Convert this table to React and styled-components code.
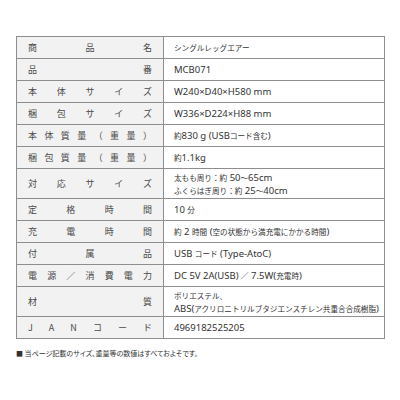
import React from "react";
import styled, { createGlobalStyle } from "styled-components";

const GlobalStyle = createGlobalStyle`
  html, body {
    margin: 0;
    padding: 0;
    background: #fff;
  }
  body {
    font-family: "Noto Sans CJK JP", "Noto Sans", sans-serif;
    color: #333;
  }
`;

const Page = styled.div`
  width: 400px;
  height: 400px;
  padding: 36px 15px 0 16px;
  box-sizing: border-box;
`;

const SpecTable = styled.div`
  display: grid;
  grid-template-columns: 147px 1fr;
  border: 1px solid #8e8e8e;
  border-bottom: none;
`;

const Label = styled.div`
  display: flex;
  justify-content: space-between;
  align-items: center;
  height: ${(p) => (p.$tall ? "29px" : "21px")};
  padding: 0 11px 0 11px;
  background: #f2f2f2;
  border-right: 1px solid #8e8e8e;
  border-bottom: 1px solid #8e8e8e;
  font-size: 9px;
  color: #4a4a4a;
`;

const Value = styled.div`
  display: flex;
  flex-direction: column;
  justify-content: center;
  height: ${(p) => (p.$tall ? "29px" : "21px")};
  padding-left: 10px;
  border-bottom: 1px solid #8e8e8e;
  font-family: "Noto Sans", "Noto Sans CJK JP", sans-serif;
  font-size: 9.5px;
  line-height: 13px;
  color: #333;
  white-space: nowrap;
`;

const Line = styled.span`
  display: block;
  line-height: 13px;
`;

/* 和文だけ少し小さく */
const Jp = styled.span`
  font-family: "Noto Sans CJK JP", sans-serif;
  font-size: 7.6px;
`;

const Note = styled.p`
  margin: 9px 0 0;
  font-size: 7px;
  color: #333;
  font-feature-settings: "palt";
`;

const specs = [
  { label: "商品名", value: ["シングルレッグエアー"] },
  { label: "品番", value: ["MCB071"] },
  { label: "本体サイズ", value: ["W240×D40×H580 mm"] },
  { label: "梱包サイズ", value: ["W336×D224×H88 mm"] },
  { label: "本体質量（重量）", value: ["約830 g (USBコード含む)"] },
  { label: "梱包質量（重量）", value: ["約1.1kg"] },
  {
    label: "対応サイズ",
    value: ["太もも周り：約 50～65cm", "ふくらはぎ周り：約 25～40cm"],
  },
  { label: "定格時間", value: ["10 分"] },
  { label: "充電時間", value: ["約 2 時間 (空の状態から満充電にかかる時間)"] },
  { label: "付属品", value: ["USB コード (Type-AtoC)"] },
  { label: "電源／消費電力", value: ["DC 5V 2A(USB) ／ 7.5W(充電時)"] },
  {
    label: "材質",
    value: ["ポリエステル、", "ABS(アクリロニトリルブタジエンスチレン共重合合成樹脂)"],
  },
  { label: "JANコード", value: ["4969182525205"] },
];

const cjk = /([\u3000-\u30ff\u4e00-\u9fff\uff00-\uffef]+)/;

const renderLine = (text) =>
  text.split(cjk).map((part, i) =>
    cjk.test(part) ? <Jp key={i}>{part}</Jp> : <React.Fragment key={i}>{part}</React.Fragment>
  );

const App = () => {
  return (
    <Page>
      <GlobalStyle />
      <SpecTable>
        {specs.map((row) => {
          const tall = row.value.length > 1;
          return (
            <React.Fragment key={row.label}>
              <Label $tall={tall}>
                {Array.from(row.label).map((ch, i) => (
                  <span key={i}>{ch}</span>
                ))}
              </Label>
              <Value $tall={tall}>
                {row.value.map((line) => (
                  <Line key={line}>{renderLine(line)}</Line>
                ))}
              </Value>
            </React.Fragment>
          );
        })}
      </SpecTable>
      <Note>■ 当ページ記載のサイズ、重量等の数値はすべておよそです。</Note>
    </Page>
  );
};

export default App;
